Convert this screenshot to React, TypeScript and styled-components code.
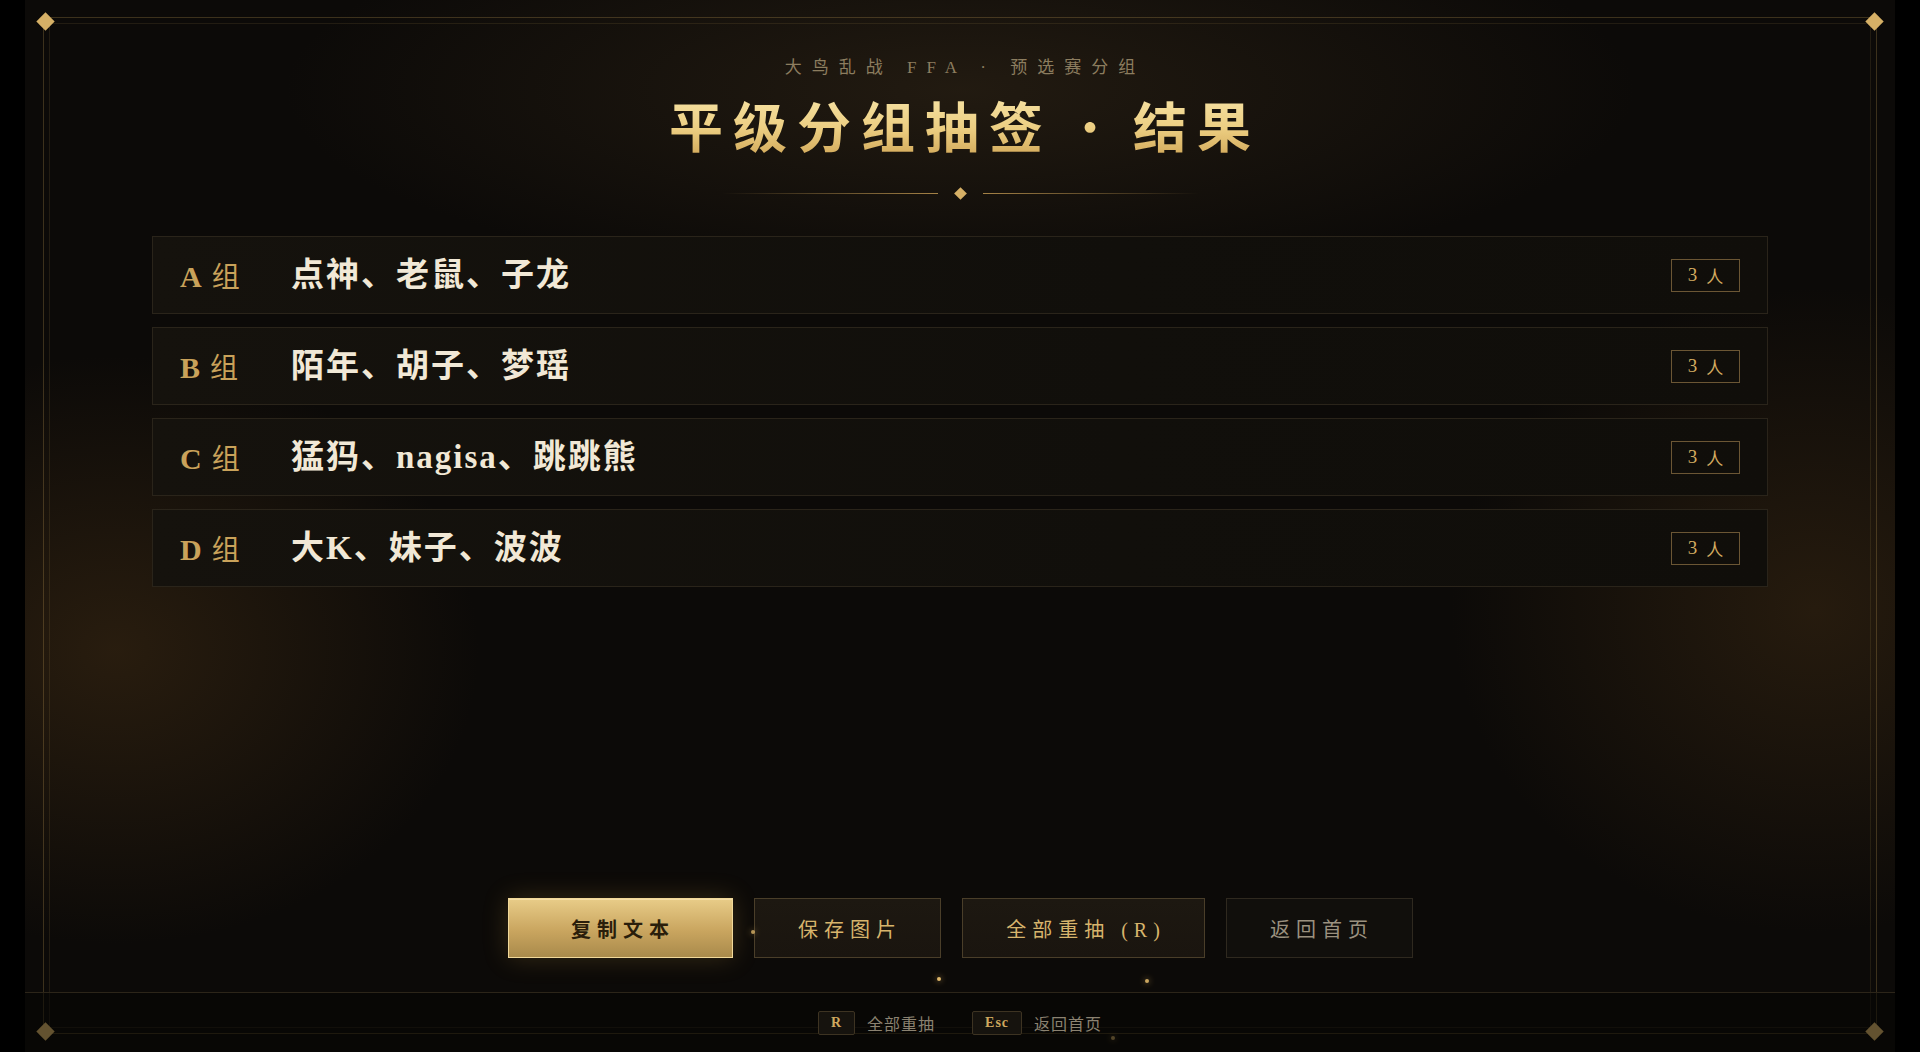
import React from "react";
import styled, { createGlobalStyle } from "styled-components";

const SERIF = `"Liberation Serif", "Noto Sans CJK SC", serif`;
const CJK = `"Noto Sans CJK SC", "Liberation Serif", sans-serif`;

const GROUPS = [
  { key: "A", members: ["点神", "老鼠", "子龙"] },
  { key: "B", members: ["陌年", "胡子", "梦瑶"] },
  { key: "C", members: ["猛犸", "nagisa", "跳跳熊"] },
  { key: "D", members: ["大K", "妹子", "波波"] },
];

const SPARKS = [
  { x: 726, y: 930, o: 0.8 },
  { x: 912, y: 977, o: 1 },
  { x: 1120, y: 979, o: 0.9 },
  { x: 1086, y: 1036, o: 0.35 },
];

const GlobalStyle = createGlobalStyle`
  html, body {
    margin: 0;
    padding: 0;
    background: #000;
  }
  * {
    box-sizing: border-box;
  }
`;

const Page = styled.div`
  width: 100%;
  height: 1052px;
  display: flex;
  justify-content: center;
  background: #000;
  overflow: hidden;
`;

const Stage = styled.main`
  position: relative;
  width: 1870px;
  height: 1052px;
  display: flex;
  flex-direction: column;
  background:
    radial-gradient(ellipse 520px 420px at 90px 650px, rgba(64, 44, 20, 0.55), transparent 70%),
    radial-gradient(ellipse 520px 460px at 1790px 610px, rgba(64, 44, 20, 0.5), transparent 70%),
    radial-gradient(ellipse 900px 260px at 50% 90px, rgba(52, 40, 24, 0.55), transparent 75%),
    #0c0a08;
`;

const FrameLine = styled.div<{ $inset: number; $alpha: number }>`
  position: absolute;
  top: ${(p) => p.$inset - 1}px;
  left: ${(p) => p.$inset}px;
  right: ${(p) => p.$inset}px;
  bottom: ${(p) => p.$inset}px;
  border: 1px solid rgba(201, 162, 90, ${(p) => p.$alpha});
  pointer-events: none;
`;

const Corner = styled.span<{ $top?: boolean; $left?: boolean }>`
  position: absolute;
  width: 13px;
  height: 13px;
  background: #d6b066;
  transform: rotate(45deg);
  ${(p) => (p.$top ? "top: 15px;" : "bottom: 14px;")}
  ${(p) => (p.$left ? "left: 14px;" : "right: 14px;")}
`;

const Header = styled.header`
  position: relative;
  padding-top: 56px;
  display: flex;
  flex-direction: column;
  align-items: center;
`;

const Kicker = styled.div`
  font-family: ${SERIF};
  font-size: 17px;
  line-height: 24px;
  letter-spacing: 10px;
  margin-right: -10px;
  color: #8c7d5f;
`;

const Title = styled.h1`
  margin: 13px -10px 0 0;
  font-family: ${CJK};
  font-size: 54px;
  line-height: 64px;
  font-weight: 700;
  letter-spacing: 10px;
  white-space: nowrap;
  background: linear-gradient(180deg, #f6e3a6 0%, #ecce82 55%, #d2a95a 100%);
  -webkit-background-clip: text;
  background-clip: text;
  color: transparent;
`;

const TitleDot = styled.span`
  display: inline-block;
  width: 74px;
  margin-right: 6px;
  text-align: center;
  letter-spacing: 0;
  font-size: 42px;
  vertical-align: top;
`;

const Divider = styled.div`
  margin-top: 30px;
  display: flex;
  align-items: center;
  gap: 16px;
`;

const DividerLine = styled.span<{ $flip?: boolean }>`
  width: 216px;
  height: 1px;
  background: linear-gradient(
    ${(p) => (p.$flip ? "270deg" : "90deg")},
    rgba(180, 140, 70, 0),
    rgba(190, 150, 80, 0.85)
  );
`;

const DividerGem = styled.span`
  width: 9px;
  height: 9px;
  margin: 2px;
  background: #d6b066;
  transform: rotate(45deg);
`;

const GroupList = styled.section`
  position: relative;
  width: 1616px;
  margin: 36px auto 0;
  display: flex;
  flex-direction: column;
  gap: 13px;
`;

const GroupRow = styled.div`
  height: 78px;
  display: grid;
  grid-template-columns: 111px 1fr auto;
  align-items: center;
  padding: 0 27px;
  border: 1px solid #2a241a;
  background: linear-gradient(90deg, #15120d 0%, #110f0b 60%, #100e0a 100%);
`;

const GroupLabel = styled.div`
  display: flex;
  align-items: baseline;
  gap: 10px;
  color: #c9a25a;
`;

const GroupLetter = styled.span`
  font-family: ${SERIF};
  font-weight: 700;
  font-size: 30px;
`;

const GroupWord = styled.span`
  font-family: ${CJK};
  font-weight: 400;
  font-size: 28px;
`;

const Members = styled.div`
  font-family: ${SERIF};
  font-size: 33px;
  font-weight: 700;
  letter-spacing: 2px;
  color: #f1e8d6;
  line-height: 1;
`;

const Badge = styled.span`
  width: 69px;
  height: 33px;
  display: flex;
  align-items: center;
  justify-content: center;
  gap: 9px;
  border: 1px solid #6b5634;
  color: #d2ab60;
  font-family: ${SERIF};
  font-size: 17px;
`;

const BadgeCount = styled.span`
  font-size: 19px;
`;

const Spacer = styled.div`
  flex: 1;
`;

const Actions = styled.div`
  position: relative;
  display: flex;
  justify-content: center;
  gap: 21px;
  margin-bottom: 34px;
`;

type Variant = "primary" | "secondary" | "ghost";

const ActionButton = styled.button<{ $variant: Variant; $width: number }>`
  width: ${(p) => p.$width}px;
  height: 60px;
  padding: 0 0 0 6px;
  font-family: ${SERIF};
  font-size: 20px;
  letter-spacing: 6px;
  cursor: pointer;
  ${(p) =>
    p.$variant === "primary"
      ? `
    color: #2a1e0b;
    font-weight: 700;
    border: 1px solid #f1d99a;
    background: linear-gradient(180deg, #e8cc88 0%, #c9a55f 55%, #a98a4b 100%);
    box-shadow: 0 0 26px rgba(200, 155, 70, 0.22), inset 0 1px 0 rgba(255, 240, 200, 0.5);
  `
      : p.$variant === "secondary"
      ? `
    color: #d7b46c;
    border: 1px solid #4a3e29;
    background: linear-gradient(180deg, #1d1811 0%, #1a150f 100%);
  `
      : `
    color: #9b917f;
    border: 1px solid #2f291f;
    background: #110f0c;
  `}
`;

const Spark = styled.span`
  position: absolute;
  width: 4px;
  height: 4px;
  border-radius: 50%;
  background: #e0b86a;
  box-shadow: 0 0 6px rgba(230, 185, 100, 0.8);
`;

const Footer = styled.footer`
  position: relative;
  height: 60px;
  display: flex;
  align-items: center;
  justify-content: center;
  gap: 37px;
  border-top: 1px solid #2c2519;
  background: rgba(6, 5, 4, 0.55);
`;

const Hint = styled.div`
  display: flex;
  align-items: center;
  gap: 12px;
`;

const Key = styled.kbd`
  height: 24px;
  padding: 0 12px;
  display: flex;
  align-items: center;
  border: 1px solid #3d3322;
  border-radius: 2px;
  background: #16130e;
  color: #cfa85e;
  font-family: ${SERIF};
  font-weight: 700;
  font-size: 14px;
  letter-spacing: 1px;
`;

const HintText = styled.span`
  font-family: ${CJK};
  font-size: 16px;
  letter-spacing: 1px;
  color: #8b8271;
`;

export default function App() {
  return (
    <>
      <GlobalStyle />
      <Page>
        <Stage>
          <FrameLine $inset={18} $alpha={0.26} />
          <FrameLine $inset={24} $alpha={0.12} />
          <Corner $top $left />
          <Corner $top />
          <Corner $left />
          <Corner />

          <Header>
            <Kicker>大鸟乱战 FFA · 预选赛分组</Kicker>
            <Title>
              平级分组抽签<TitleDot>·</TitleDot>结果
            </Title>
            <Divider>
              <DividerLine />
              <DividerGem />
              <DividerLine $flip />
            </Divider>
          </Header>

          <GroupList>
            {GROUPS.map((g) => (
              <GroupRow key={g.key}>
                <GroupLabel>
                  <GroupLetter>{g.key}</GroupLetter>
                  <GroupWord>组</GroupWord>
                </GroupLabel>
                <Members>{g.members.join("、")}</Members>
                <Badge>
                  <BadgeCount>{g.members.length}</BadgeCount>
                  <span>人</span>
                </Badge>
              </GroupRow>
            ))}
          </GroupList>

          <Spacer />

          <Actions>
            <ActionButton $variant="primary" $width={225}>复制文本</ActionButton>
            <ActionButton $variant="secondary" $width={187}>保存图片</ActionButton>
            <ActionButton $variant="secondary" $width={243}>全部重抽 (R)</ActionButton>
            <ActionButton $variant="ghost" $width={187}>返回首页</ActionButton>
          </Actions>

          <Footer>
            <Hint>
              <Key>R</Key>
              <HintText>全部重抽</HintText>
            </Hint>
            <Hint>
              <Key>Esc</Key>
              <HintText>返回首页</HintText>
            </Hint>
          </Footer>

          {SPARKS.map((s, i) => (
            <Spark key={i} style={{ left: s.x, top: s.y, opacity: s.o }} />
          ))}
        </Stage>
      </Page>
    </>
  );
}
